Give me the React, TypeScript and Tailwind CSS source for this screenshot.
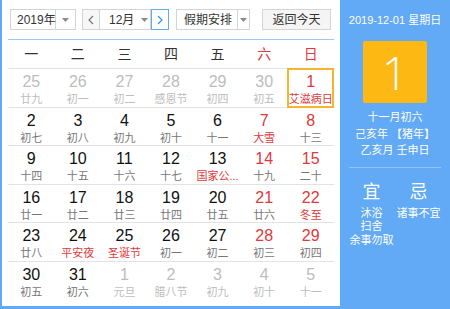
import React from "react";

type Cell = { n: number; l: string; out?: boolean; redN?: boolean; redL?: boolean; sel?: boolean };

const rows: Cell[][] = [
  [
    { n: 25, l: "廿九", out: true },
    { n: 26, l: "初一", out: true },
    { n: 27, l: "初二", out: true },
    { n: 28, l: "感恩节", out: true },
    { n: 29, l: "初四", out: true },
    { n: 30, l: "初五", out: true },
    { n: 1, l: "艾滋病日", redN: true, redL: true, sel: true },
  ],
  [
    { n: 2, l: "初七" },
    { n: 3, l: "初八" },
    { n: 4, l: "初九" },
    { n: 5, l: "初十" },
    { n: 6, l: "十一" },
    { n: 7, l: "大雪", redN: true, redL: true },
    { n: 8, l: "十三", redN: true },
  ],
  [
    { n: 9, l: "十四" },
    { n: 10, l: "十五" },
    { n: 11, l: "十六" },
    { n: 12, l: "十七" },
    { n: 13, l: "国家公...", redL: true },
    { n: 14, l: "十九", redN: true },
    { n: 15, l: "二十", redN: true },
  ],
  [
    { n: 16, l: "廿一" },
    { n: 17, l: "廿二" },
    { n: 18, l: "廿三" },
    { n: 19, l: "廿四" },
    { n: 20, l: "廿五" },
    { n: 21, l: "廿六", redN: true },
    { n: 22, l: "冬至", redN: true, redL: true },
  ],
  [
    { n: 23, l: "廿八" },
    { n: 24, l: "平安夜", redL: true },
    { n: 25, l: "圣诞节", redL: true },
    { n: 26, l: "初一" },
    { n: 27, l: "初二" },
    { n: 28, l: "初三", redN: true },
    { n: 29, l: "初四", redN: true },
  ],
  [
    { n: 30, l: "初五" },
    { n: 31, l: "初六" },
    { n: 1, l: "元旦", out: true },
    { n: 2, l: "腊八节", out: true },
    { n: 3, l: "初九", out: true },
    { n: 4, l: "初十", out: true },
    { n: 5, l: "十一", out: true },
  ],
];

const font = { fontFamily: '"Liberation Sans", "Noto Sans CJK SC", sans-serif' };

function Caret() {
  return (
    <svg width="7" height="4" viewBox="0 0 7 4">
      <path d="M0 0 L7 0 L3.5 4 Z" fill="#8a8a8a" />
    </svg>
  );
}

function Chevron({ dir, color }: { dir: "l" | "r"; color: string }) {
  return (
    <svg width="6" height="10" viewBox="0 0 6 10">
      {dir === "l" ? (
        <path d="M5 1 L1 5 L5 9" fill="none" stroke={color} strokeWidth="1.2" />
      ) : (
        <path d="M1 1 L5 5 L1 9" fill="none" stroke={color} strokeWidth="1.2" />
      )}
    </svg>
  );
}

export default function App() {
  return (
    <div className="flex w-[450px] h-[309px] bg-[#62a9f6] overflow-hidden" style={font}>
      <div className="ml-[2px] mb-[3px] w-[338px] shrink-0 bg-white px-[6px] text-[#333]">
        {/* toolbar */}
        <div className="flex items-center pt-[9px] pb-[9px] border-b border-[#9cc8f3] pl-[2px] whitespace-nowrap">
          <div className="flex h-[21px] w-[66px] shrink-0 border border-[#d4d4d4] text-[12px]">
            <div className="flex items-center pl-[6px] w-[45px] border-r border-[#d4d4d4]">2019年</div>
            <div className="flex flex-1 items-center justify-center"><Caret /></div>
          </div>
          <div className="ml-[6px] flex h-[21px] shrink-0 border border-[#d4d4d4] text-[12px]">
            <div className="flex w-[17px] items-center justify-center border-r border-[#d4d4d4] bg-[#f7f7f7]">
              <Chevron dir="l" color="#777" />
            </div>
            <div className="flex w-[50px] items-center">
              <span className="ml-[9px]">12月</span>
              <span className="ml-[7px] flex"><Caret /></span>
            </div>
          </div>
          <div className="flex h-[21px] w-[18px] shrink-0 items-center justify-center border border-[#62a9f6]">
            <Chevron dir="r" color="#3d8fea" />
          </div>
          <div className="ml-[7px] flex h-[21px] w-[74px] shrink-0 border border-[#d4d4d4] text-[12px]">
            <div className="flex items-center pl-[7px] w-[61px] border-r border-[#d4d4d4]">假期安排</div>
            <div className="flex flex-1 items-center justify-center"><Caret /></div>
          </div>
          <div className="ml-[12px] flex h-[21px] w-[69px] shrink-0 items-center justify-center border border-[#d4d4d4] bg-[#f5f5f5] text-[12px]">
            返回今天
          </div>
        </div>
        {/* weekday header */}
        <div className="grid grid-cols-7 h-[29px] border-b border-[#e3e3e3] text-[14px] items-center">
          {["一", "二", "三", "四", "五", "六", "日"].map((d, i) => (
            <div key={d} className={`text-center ${i >= 5 ? "text-[#e0383b]" : "text-[#333]"}`}>
              {d}
            </div>
          ))}
        </div>
        {/* days */}
        {rows.map((r, ri) => (
          <div
            key={ri}
            className={`grid grid-cols-7 h-[38.5px] ${ri < 5 ? "border-b border-[#e3e3e3]" : ""}`}
          >
            {r.map((c, ci) => (
              <div
                key={ci}
                className={`flex flex-col items-center ${c.sel ? "border-2 border-[#f7b42c] pt-[3px] -mt-[1px] h-[39.5px]" : "pt-[4px]"}`}
              >
                <div
                  className={`text-[16px] leading-[18px] ${
                    c.out ? "text-[#bdbdbd]" : c.redN ? "text-[#e0383b]" : "text-[#111]"
                  }`}
                >
                  {c.n}
                </div>
                <div
                  className={`text-[11px] leading-[14px] mt-[1px] whitespace-nowrap ${
                    c.redL ? "text-[#e0383b]" : c.out ? "text-[#bdbdbd]" : "text-[#777]"
                  }`}
                >
                  {c.l}
                </div>
              </div>
            ))}
          </div>
        ))}
      </div>
      {/* right panel */}
      <div className="flex flex-1 flex-col items-center text-white">
        <div className="mt-[13px] text-[11px] leading-[14px] whitespace-nowrap">2019-12-01 星期日</div>
        <div className="mt-[14px] flex h-[62px] w-[64px] items-center justify-center rounded-[2px] bg-[#fdb813] text-[46px] font-light leading-none" style={{ fontFamily: '"Open Sans", "Liberation Sans", sans-serif' }}>
          1
        </div>
        <div className="mt-[6px] text-[11px] leading-[16.5px] text-center whitespace-nowrap">
          <div>十一月初六</div>
          <div>己亥年 【猪年】</div>
          <div>乙亥月 壬申日</div>
        </div>
        <div className="mt-[8px] h-px w-[92px] bg-white/30" />
        <div className="mt-[13px] flex w-[94px]">
          <div className="flex w-[47px] flex-col items-center">
            <div className="text-[18px] leading-[22px]">宜</div>
            <div className="mt-[4px] text-[11px] leading-[13.5px] text-center whitespace-nowrap">
              <div>沐浴</div>
              <div>扫舍</div>
              <div>余事勿取</div>
            </div>
          </div>
          <div className="flex w-[47px] flex-col items-center">
            <div className="text-[18px] leading-[22px]">忌</div>
            <div className="mt-[4px] text-[11px] leading-[13.5px] text-center whitespace-nowrap">
              <div>诸事不宜</div>
            </div>
          </div>
        </div>
      </div>
    </div>
  );
}
